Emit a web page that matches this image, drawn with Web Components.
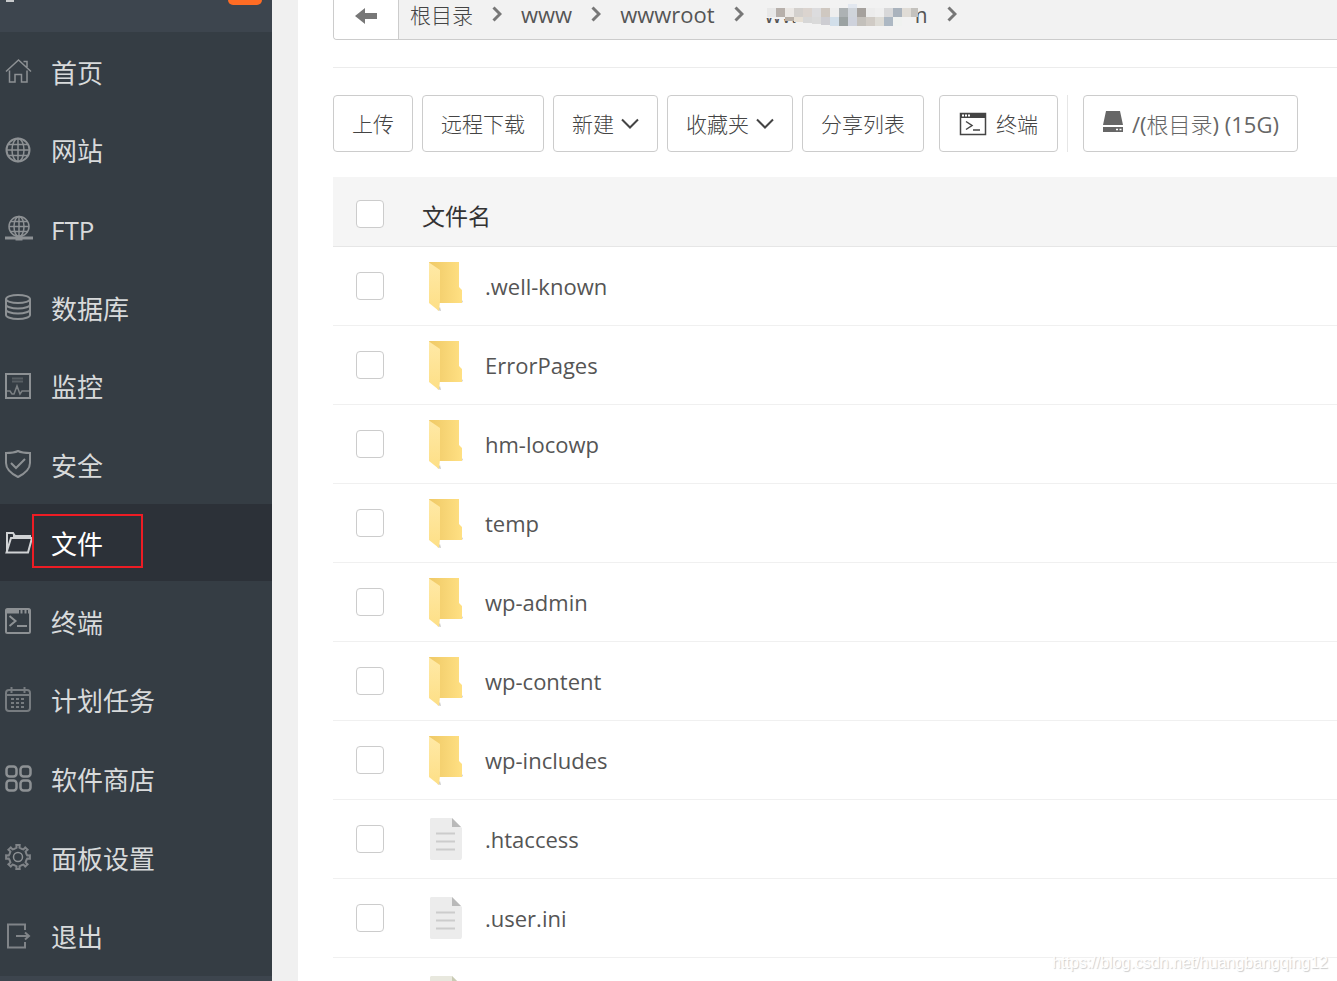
<!DOCTYPE html>
<html lang="zh-CN">
<head>
<meta charset="utf-8">
<title>文件</title>
<style>
html, body { margin: 0; height: 100%; }
body { overflow: hidden; background: #fff; font-family: "Open Sans", "Noto Sans CJK SC", sans-serif; }
</style>
</head>
<body>
<panel-app></panel-app>

<script>
const define = (name, html, setup) => {
  const tpl = document.createElement('template');
  tpl.innerHTML = html;
  customElements.define(name, class extends HTMLElement {
    constructor() {
      super();
      this.attachShadow({ mode: 'open' }).append(tpl.content.cloneNode(true));
    }
    connectedCallback() { if (setup) setup(this, this.shadowRoot); }
  });
};

const gear = () => {
  let d = '';
  for (let i = 0; i < 8; i++) {
    const a = i * 45 - 90;
    [[-18, 9], [-9, 9.4], [-8, 12], [8, 12], [9, 9.4], [18, 9]].forEach(([o, r]) => {
      const t = (a + o) * Math.PI / 180;
      d += (d ? 'L' : 'M') + (13 + r * Math.cos(t)).toFixed(2) + ' ' + (13 + r * Math.sin(t)).toFixed(2);
    });
  }
  return d + 'Z';
};

const ICONS = {
  home: [27, 26, '<path d="M1 13.500 13.500 2 26 13.500M4.500 12.500V24H10v-7.500h6.500V24H22V12.500M18.500 3.500h3.500v5.500"/>'],
  globe: [26, 26, '<circle cx="13" cy="13" r="11.500" stroke-width="2"/><ellipse cx="13" cy="13" rx="6" ry="11.500"/><path d="M13 1v24M1 13h24M3 7.500h20M3 18.500h20"/>'],
  ftp: [28, 26, '<circle cx="14" cy="11.500" r="10"/><ellipse cx="14" cy="11.500" rx="5" ry="10"/><path d="M14 1v21M4 11.500h20M5 6.500h18M5 16.500h18"/><path stroke-width="3" d="M0 23h28"/><path stroke-width="5" d="M10.500 23h7"/>'],
  db: [26, 26, '<g stroke-width="2"><ellipse cx="13" cy="5" rx="12" ry="4"/><path d="M1 5v16c0 2 5 4 12 4s12-2 12-4V5M1 10.500c0 2 5 4 12 4s12-2 12-4M1 15.500c0 2 5 4 12 4s12-2 12-4"/></g>'],
  monitor: [26, 26, '<path stroke-width="2" d="M1 1h24v24H1z"/><path opacity=".8" d="M1 18h4l2 3h2l3-8 3 8 2-3h8"/><path opacity=".4" stroke-width="2" d="M7 5.500h11M7 8.500h11"/>'],
  shield: [26, 28, '<path stroke-width="2" d="M13 1c4 2 8 2 12 2V13c0 7-6 11-12 14C7 24 1 20 1 13V3C5 3 9 3 13 1ZM6 13l5 5 9-9"/>'],
  folder: [28, 22, '<path stroke-width="2" d="M2 20V1h6l2 3h15v3M1.500 20.500 6 6h21l-4 14.500z"/><path stroke-width="3" d="M8 4.500h17"/>'],
  term: [26, 26, '<rect x="1" y="1" width="24" height="24" rx="1.500" stroke-width="2"/><path stroke-width="4" d="M1 3.500h13M15.500 3.500h2M19.500 3.500h2M23 3.500h2"/><path stroke-width="2" d="m4.500 8 6 5-6 5M12 18h10"/>'],
  cal: [26, 26, '<g opacity=".75"><rect x="1" y="3" width="24" height="21" rx="3" stroke-width="2"/><path stroke-width="2" d="M1 8h24M6.500 0v6M19.500 0v6"/><path stroke-width="2" stroke-dasharray="3 2" d="M6 12h14M6 16h14M6 20h14"/></g>'],
  store: [27, 27, '<g stroke-width="2.500"><rect x="1.500" y="1.500" width="10" height="10" rx="3"/><rect x="15.500" y="1.500" width="10" height="10" rx="3"/><rect x="1.500" y="15.500" width="10" height="10" rx="3"/><rect x="15.500" y="15.500" width="10" height="10" rx="3"/></g>'],
  gear: [26, 26, '<path stroke-width="2" opacity=".85" d="' + gear() + '"/><circle cx="13" cy="13" r="4.500"/>'],
  exit: [26, 26, '<path stroke-width="2" opacity=".85" d="M20 7V1.500H3v23h17V19M11 13h12M20 9.500l4 3.500-4 3.500"/>'],
  back: [22, 18, '<path fill="currentColor" stroke="none" d="M0 9 10 1v5h12v6H10v5z"/>'],
  crumb: [10, 16, '<path stroke-width="3" d="m1.500 1.500 6.500 6.500-6.500 6.500"/>'],
  down: [18, 11, '<path stroke-width="2" d="m1 1.500 8 8 8-8"/>'],
  shell: [28, 24, '<path fill="none" d="M1.500 1.500h25v21h-25z"/><path fill="currentColor" stroke="none" d="M1 1h26v5H1z"/><path stroke="#fff" stroke-width="2" stroke-dasharray="2 1" d="M3 3.500h8"/><path d="m7 9.500 6 4-6 4M14 18h7"/>'],
  disk: [22, 26, '<path fill="currentColor" stroke="none" d="M4 0h14l3 14H1zM1 16h20v5H1z"/><path stroke="#fff" d="M14 18.500h2M17.500 18.500h2"/>'],
  dir: [38, 54, '<defs><linearGradient id="b"><stop offset="0" stop-color="#efc966"/><stop offset="1" stop-color="#ffe083"/></linearGradient><linearGradient id="f" x2="0" y2="1"><stop offset="0" stop-color="#ffe9a6"/><stop offset="1" stop-color="#fddf86"/></linearGradient></defs><g transform="translate(0 2)"><path stroke="none" fill="#ccc" d="m10 49 4 1-1-4zM34 42l2-1-1-2z"/><path stroke="none" fill="url(#b)" d="M2 1h30v25l3 3v13H9z"/><path stroke="none" fill="url(#f)" d="M2 1.500 13 9v31l-1 10L2 42z"/></g>'],
  file: [34, 44, '<path stroke="none" fill="#ececec" d="M2 1h21l10 10v30l-1 2H2l-1-1V2z"/><path stroke="none" fill="#b9b9b9" d="M23 1v9h9z"/><path stroke="#ccc" stroke-width="2" d="M7 16.500h19M7 24.500h19M7 32.500h19"/>'],
  doc: [34, 44, '<path stroke="none" fill="#e8e8de" d="M2 1h21l10 10v30l-1 2H2l-1-1V2z"/><path stroke="none" fill="#c9cbb4" d="M23 1v9h9z"/>']
};

define('ui-icon', '<style>:host{display:inline-flex;flex:none}svg{display:block}</style>', (el, root) => {
  const [w, h, body] = ICONS[el.getAttribute('name')];
  root.innerHTML += `<svg width="${w}" height="${h}" viewBox="0 0 ${w} ${h}" fill="none" stroke="currentColor" stroke-width="1.500" aria-hidden="true">${body}</svg>`;
});

define('nav-item', `
<style>
:host { display: flex; flex: 1; min-height: 48px; color: #d8dadb; --icon: #8d9194; }
:host([active]) { color: #fff; --icon: #d0d2d4; }
a { flex: 1; position: relative; display: grid; grid-template-columns: 46px 1fr; align-items: center; margin-bottom: 2px;
    padding-left: 5px; color: inherit; text-decoration: none; font-size: 26px; line-height: 38px; }
:host([active]) a { background: #2c3138; }
.icon { color: var(--icon); }
.label { padding-top: 3px; }
.mark { display: none; position: absolute; left: 32px; top: 10px; bottom: 13px; width: 107px; border: 2px solid #ed1c24; }
:host([active]) .mark { display: block; }
</style>
<a href="#"><span class="icon"></span><span class="label"><slot></slot></span><i class="mark"></i></a>`, (el, root) => {
  root.querySelector('.icon').innerHTML = `<ui-icon name="${el.getAttribute('icon')}" style="display:flex"></ui-icon>`;
});

define('side-nav', `
<style>
:host { display: flex; flex-direction: column; background: #353d44; }
header { flex: none; height: 32px; background: #3d454e; display: flex; justify-content: space-between; align-items: flex-start; padding: 0 10px 0 6px; }
.logo { width: 8px; height: 2px; background: #c8cacc; }
.count { width: 34px; height: 5px; border-radius: 0 0 12px 12px; background: #ff6c24; }
nav { flex: 1; display: flex; flex-direction: column; padding-top: 1px; }
footer { flex: none; height: 5px; background: #3d454e; }
</style>
<header><span class="logo"></span><span class="count"></span></header>
<nav>
<nav-item icon="home">首页</nav-item>
<nav-item icon="globe">网站</nav-item>
<nav-item icon="ftp">FTP</nav-item>
<nav-item icon="db">数据库</nav-item>
<nav-item icon="monitor">监控</nav-item>
<nav-item icon="shield">安全</nav-item>
<nav-item icon="folder" active>文件</nav-item>
<nav-item icon="term">终端</nav-item>
<nav-item icon="cal">计划任务</nav-item>
<nav-item icon="store">软件商店</nav-item>
<nav-item icon="gear">面板设置</nav-item>
<nav-item icon="exit">退出</nav-item>
</nav>
<footer></footer>`);

define('masked-name', `
<style>
:host { display: inline-block; position: relative; margin-left: 2px; }
.ends { display: flex; justify-content: space-between; width: 163px; }
svg { position: absolute; left: -2px; top: 5px; }
</style>
<span class="ends"><span>www</span><span>m</span></span>
<svg width="170" height="24" viewBox="0 0 170 24" shape-rendering="crispEdges" aria-hidden="true"></svg>`, (el, root) => {
  const rows = [
    [4, 4, '#e8e8e8 #b7b0ab #ebe8e5 #d3d0cd #dbd4cf #dcdcde #cfc8c1 #eeeeee #adb2b4 #cfd4da #a5a19d #ececec #efefef #d8d8d9 #aab3bd #e0dcd6 #c4c2be'],
    [13, 22, '#b8b0a8 #e6dfd4 #d7d7d7 #dadada #cdcdd2 #d2dfea #9ba2a2 #ced2dc #c3c0bb #d0cbc5 #dedcd6 #adb8c3 #f0f2f0']
  ];
  const cut = [4, 5, 6, 7, 8];
  let out = '<path fill="#f2f2f2" d="M0 0h153v22H60l-26-1V16L2 14z"/><path fill="#e2e7ef" d="M85 0h9v4h-9z"/>';
  rows.forEach(([y, x, list], r) => list.split(' ').forEach((c, i) => {
    out += `<rect x="${x + i * 9}" y="${y}" width="${r === 0 && i === 16 ? 7 : 9}" height="${r === 1 && cut[i] || 9}" fill="${c}"/>`;
  }));
  root.querySelector('svg').innerHTML = out;
});

define('path-bar', `
<style>
:host { display: flex; height: 39px; border: solid #ccc; border-width: 0 0 1px 1px; border-radius: 0 0 0 4px; background: #f2f2f2; color: #555; overflow: hidden; }
button { width: 65px; flex: none; border: 0; border-right: 1px solid #ccc; background: #fff; color: #666; padding: 0 0 8px; display: flex; align-items: center; justify-content: center; }
nav { display: flex; align-items: center; gap: 19px; padding: 0 11px 12px; font-size: 22px; line-height: 30px; white-space: nowrap; }
a { color: inherit; text-decoration: none; }
.root { font-size: 21px; font-weight: 300; color: #444; padding-top: 2px; }
ui-icon { color: #777; }
</style>
<button aria-label="返回"><ui-icon name="back"></ui-icon></button>
<nav>
<a class="root" href="#">根目录</a><ui-icon name="crumb"></ui-icon>
<a href="#">www</a><ui-icon name="crumb"></ui-icon>
<a href="#">wwwroot</a><ui-icon name="crumb"></ui-icon>
<a href="#"><masked-name></masked-name></a><ui-icon name="crumb"></ui-icon>
</nav>`);

define('tool-button', `
<style>
:host { display: inline-flex; flex: none; }
button { font: 300 21px/30px "Open Sans", "Noto Sans CJK SC", sans-serif; color: #444; background: #fff; border: 1px solid #ccc; border-radius: 4px;
  height: 57px; padding: 0 18px; display: flex; align-items: center; gap: 8px; white-space: nowrap; }
:host([menu]) button { gap: 7px; }
:host([wide]) button { padding: 0 19px; gap: 9px; }
:host([regular]) button { font-size: 22px; font-weight: 400; color: #666; }
</style>
<button><slot></slot></button>`);

define('tool-bar', `
<style>
:host { display: flex; align-items: center; gap: 9px; margin-top: 27px; overflow: hidden; }
.sep { width: 1px; height: 57px; background: #e6e6e6; margin-right: 6px; }
.shell { margin-left: 6px; }
.thin { font-weight: 300; }
</style>
<tool-button>上传</tool-button>
<tool-button>远程下载</tool-button>
<tool-button menu>新建<ui-icon name="down"></ui-icon></tool-button>
<tool-button menu>收藏夹<ui-icon name="down"></ui-icon></tool-button>
<tool-button>分享列表</tool-button>
<tool-button class="shell" wide><ui-icon name="shell"></ui-icon>终端</tool-button>
<span class="sep"></span>
<tool-button regular><ui-icon name="disk"></ui-icon><span>/(<span class="thin">根目录</span>) (15G)</span></tool-button>`);

define('file-table', `
<style>
:host { display: block; margin-top: 25px; }
table { width: 100%; border-collapse: separate; border-spacing: 0; table-layout: fixed; }
th, td { padding: 0; text-align: left; vertical-align: middle; box-sizing: border-box; border-bottom: 1px solid #f0f0f0; }
th { height: 70px; padding-top: 8px; background: #f5f5f5; font-size: 23px; line-height: 34px; font-weight: 400; color: #333; border-color: #e6e6e6; }
td { height: 79px; font-size: 22px; line-height: 30px; color: #555; }
.pick { width: 89px; padding-left: 23px; }
th.pick { padding-top: 4px; }
.name { display: grid; grid-template-columns: 37px 1fr; align-items: center; gap: 21px; padding-left: 5px; }
.name ui-icon { justify-self: center; }
.name a { color: inherit; text-decoration: none; }
input { appearance: none; display: block; box-sizing: border-box; width: 28px; height: 28px; margin: 0; border: 1px solid #ccc; border-radius: 4px; background: #fff; }
</style>
<table>
<thead><tr><th class="pick"><input type="checkbox" aria-label="全选"></th><th>文件名</th></tr></thead>
<tbody></tbody>
</table>`, (el, root) => {
  const rows = [['dir', '.well-known'], ['dir', 'ErrorPages'], ['dir', 'hm-locowp'], ['dir', 'temp'], ['dir', 'wp-admin'],
    ['dir', 'wp-content'], ['dir', 'wp-includes'], ['file', '.htaccess'], ['file', '.user.ini'], ['doc', '']];
  root.querySelector('tbody').innerHTML = rows.map(([icon, name]) =>
    `<tr><td class="pick"><input type="checkbox" aria-label="${name}"></td><td><div class="name"><ui-icon name="${icon}"></ui-icon><a href="#">${name}</a></div></td></tr>`).join('');
});

define('panel-app', `
<style>
:host { display: grid; grid-template-columns: 272px minmax(0, 1fr); height: 100vh; background: #f0f0f0; overflow: hidden; }
main { margin-left: 26px; padding-left: 35px; background: #fff; overflow: hidden; }
hr { border: 0; height: 1px; background: #ececec; margin: 27px 0 0; }
.credit { position: absolute; right: 9px; bottom: 8px; font: 16px/20px "Liberation Sans", sans-serif; color: #fff; text-shadow: 1px 1px 1px #ccc; }
</style>
<side-nav></side-nav>
<main><path-bar></path-bar><hr><tool-bar></tool-bar><file-table></file-table></main>
<span class="credit">https://blog.csdn.net/huangbangqing12</span>`);
</script>
</body>
</html>
